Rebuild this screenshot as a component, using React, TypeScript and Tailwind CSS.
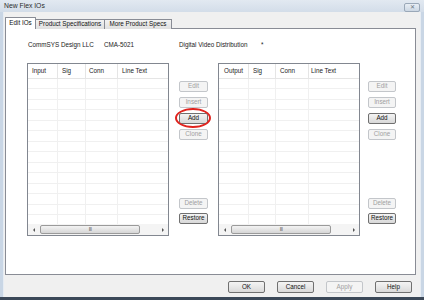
import React from "react";

function Btn({ label, disabled, circled }: { label: string; disabled?: boolean; circled?: boolean }) {
  return (
    <div className="relative">
      <div
        className={
          disabled
            ? "h-[11px] flex items-center justify-center rounded-[2px] border border-[#c3c6ca] bg-[#f4f4f4] text-[#a0a0a0]"
            : "h-[11px] flex items-center justify-center rounded-[2px] border border-[#707070] bg-gradient-to-b from-[#f4f4f4] to-[#d8d8d8] text-[#111]"
        }
      >
        {label}
      </div>
      {circled && (
        <div className="absolute left-[-4px] top-[-5px] w-[36px] h-[20px] rounded-[50%] border-2 border-[#e0231e]" />
      )}
    </div>
  );
}

function ListBox({ cols }: { cols: { label: string; w: string; pl: string }[] }) {
  return (
    <div className="w-[142px] h-[173px] border border-[#828790] bg-white flex flex-col">
      <div className="h-[15px] flex border-b border-[#e5e5e5] text-[#222]">
        {cols.map((c, i) => (
          <div
            key={i}
            className={`${c.w} ${c.pl} h-full flex items-center whitespace-nowrap ${i < cols.length - 1 ? "border-r border-[#e5e5e5]" : ""}`}
          >
            {c.label}
          </div>
        ))}
      </div>
      <div className="flex-1 flex bg-[repeating-linear-gradient(to_bottom,transparent_0px,transparent_9.5px,#f0f0f0_9.5px,#f0f0f0_10.5px)]">
        {cols.map((c, i) => (
          <div key={i} className={`${c.w} h-full ${i < cols.length - 1 ? "border-r border-[#f0f0f0]" : ""}`} />
        ))}
      </div>
      <div className="h-[11px] flex items-center bg-[#f4f4f4]">
        <div className="w-[11px] h-full flex items-center justify-center">
          <div className="w-0 h-0 border-y-[2px] border-y-transparent border-r-[2px] border-r-[#555]" />
        </div>
        <div className="w-[100px] h-[9px] ml-[1px] rounded-[2px] border border-[#9a9a9a] bg-gradient-to-b from-[#f3f3f3] to-[#d6d6d6] flex items-center justify-center text-[5px] text-[#555] tracking-[-0.5px]">
          III
        </div>
        <div className="flex-1" />
        <div className="w-[11px] h-full flex items-center justify-center">
          <div className="w-0 h-0 border-y-[2px] border-y-transparent border-l-[2px] border-l-[#555]" />
        </div>
      </div>
    </div>
  );
}

function BtnCol({ circled }: { circled?: boolean }) {
  return (
    <div className="h-[173px] flex flex-col">
      <div className="mt-[18px] flex flex-col gap-[5px]">
        <Btn label="Edit" disabled />
        <Btn label="Insert" disabled />
        <Btn label="Add" circled={circled} />
        <Btn label="Clone" disabled />
      </div>
      <div className="mt-auto mb-[12px] flex flex-col gap-[4px]">
        <Btn label="Delete" disabled />
        <Btn label="Restore" />
      </div>
    </div>
  );
}

export default function App() {
  return (
    <div className="w-[424px] h-[300px] flex flex-col bg-[#c9d6e5] font-['Liberation_Sans',Arial,sans-serif] text-[6.3px] leading-none overflow-hidden">
      <div className="h-[12px] shrink-0 flex items-center pl-[4px] pr-[4px] bg-gradient-to-b from-[#e2e9f1] to-[#d3dde9] text-[#2b2b2b] text-[6.8px]">
        <span>New Flex IOs</span>
        <div className="ml-auto mt-[2px] w-[16px] h-[9px] rounded-[2px] border border-[#9aa8b8] bg-gradient-to-b from-[#e8eef5] to-[#ccd7e3] flex items-center justify-center text-[6px] text-[#6b7785]">
          ✕
        </div>
      </div>
      <div className="flex-1 flex flex-col mx-[3px] bg-[#f0f0f0] border-l border-r border-[#e6ecf3]">
        <div className="h-[17px] shrink-0 flex items-end pl-[1px] relative z-10 -mb-[1px] whitespace-nowrap">
          <div className="w-[31px] h-[12px] bg-white border border-b-0 border-[#898c95] rounded-t-[1px] flex items-center justify-center text-[#111]">
            Edit IOs
          </div>
          <div className="w-[69px] h-[10px] border border-l-0 border-b-0 border-[#898c95] bg-gradient-to-b from-[#f2f2f2] to-[#e0e0e0] flex items-center justify-center text-[#111]">
            Product Specifications
          </div>
          <div className="w-[67px] h-[10px] border border-l-0 border-b-0 border-[#898c95] bg-gradient-to-b from-[#f2f2f2] to-[#e0e0e0] flex items-center justify-center text-[#111]">
            More Product Specs
          </div>
        </div>
        <div className="ml-[1px] mr-[4px] h-[247px] shrink-0 border border-[#898c95] bg-white text-[#1a1a1a]">
          <div className="pt-[13px] pl-[22px] flex h-[19px] whitespace-nowrap">
            <span className="w-[76px]">CommSYS Design LLC</span>
            <span className="w-[75px]">CMA-5021</span>
            <span className="w-[82px]">Digital Video Distribution</span>
            <span>*</span>
          </div>
          <div className="mt-[15px] pl-[21px] flex">
            <ListBox
              cols={[
                { label: "Input", w: "w-[30px]", pl: "pl-[4px]" },
                { label: "Sig", w: "w-[28px]", pl: "pl-[4px]" },
                { label: "Conn", w: "w-[32px]", pl: "pl-[3px]" },
                { label: "Line Text", w: "flex-1", pl: "pl-[4px]" },
              ]}
            />
            <div className="w-[29px] ml-[10px]">
              <BtnCol circled />
            </div>
            <div className="ml-[10px]">
              <ListBox
                cols={[
                  { label: "Output", w: "w-[30px]", pl: "pl-[5px]" },
                  { label: "Sig", w: "w-[27px]", pl: "pl-[4px]" },
                  { label: "Conn", w: "w-[33px]", pl: "pl-[4px]" },
                  { label: "Line Text", w: "flex-1", pl: "pl-[2px]" },
                ]}
              />
            </div>
            <div className="w-[28px] ml-[8px]">
              <BtnCol />
            </div>
          </div>
        </div>
        <div className="flex-1 flex justify-end items-start pt-[6px] pr-[8px] gap-[12px]">
          <div className="w-[37px] h-[12px] flex items-center justify-center rounded-[2px] border border-[#707070] bg-gradient-to-b from-[#f4f4f4] to-[#dadada] text-[#111]">OK</div>
          <div className="w-[37px] h-[12px] flex items-center justify-center rounded-[2px] border border-[#707070] bg-gradient-to-b from-[#f4f4f4] to-[#dadada] text-[#111]">Cancel</div>
          <div className="w-[37px] h-[12px] flex items-center justify-center rounded-[2px] border border-[#c3c6ca] bg-[#f4f4f4] text-[#a0a0a0]">Apply</div>
          <div className="w-[37px] h-[12px] flex items-center justify-center rounded-[2px] border border-[#707070] bg-gradient-to-b from-[#f4f4f4] to-[#dadada] text-[#111]">Help</div>
        </div>
      </div>
      <div className="h-[3px] shrink-0 bg-[#3b4858]" />
    </div>
  );
}
